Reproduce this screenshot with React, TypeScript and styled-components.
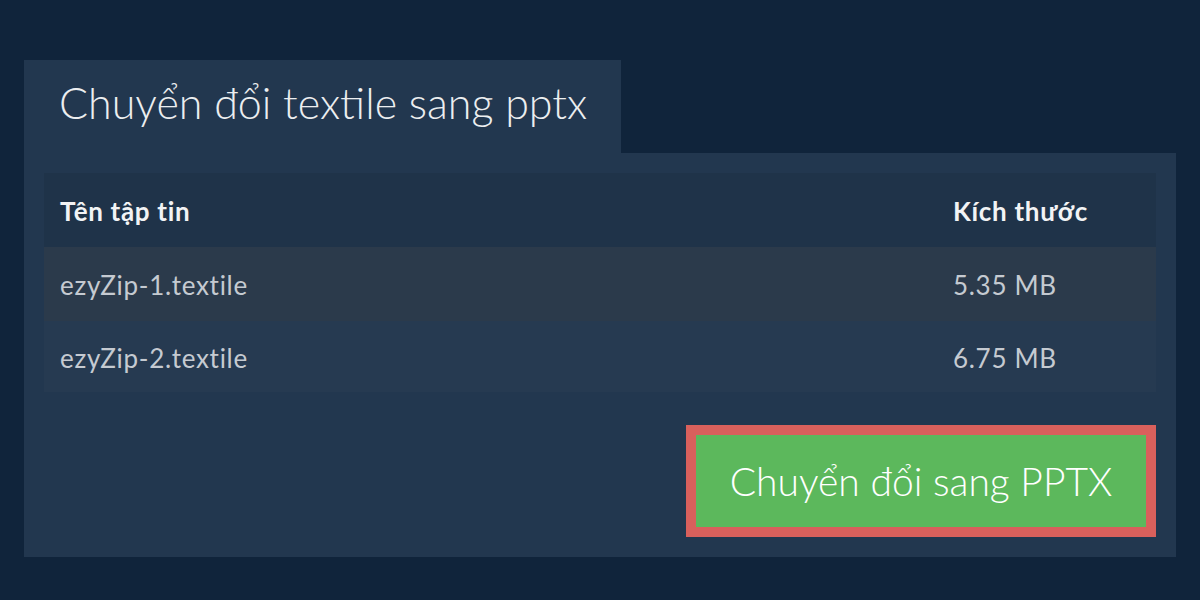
import React from 'react';
import styled, { createGlobalStyle } from 'styled-components';

const GlobalStyle = createGlobalStyle`
  html, body {
    margin: 0;
    padding: 0;
    background-color: #10243b;
    font-family: 'Lato', 'Noto Sans', sans-serif;
  }
`;

const Page = styled.div`
  width: 1200px;
  height: 600px;
  box-sizing: border-box;
  padding: 60px 24px 43px;
  display: flex;
  flex-direction: column;
`;

const Tab = styled.div`
  align-self: flex-start;
  height: 94px;
  padding: 0 34px 0 35px;
  background-color: #22374f;
  display: flex;
  align-items: center;

  h1 {
    margin: 0 0 8px;
    font-size: 43px;
    font-weight: 300;
    color: #eceef0;
  }
`;

const Panel = styled.div`
  background-color: #22374f;
  padding: 20px;
  display: flex;
  flex-direction: column;
  gap: 33px;
`;

const FileTable = styled.div`
  display: flex;
  flex-direction: column;
`;

const Row = styled.div<{ $bg: string; $height: number; $head?: boolean }>`
  display: grid;
  grid-template-columns: 1fr 203px;
  align-items: center;
  height: ${(p) => p.$height}px;
  padding: 2px 0 0 16px;
  box-sizing: border-box;
  background-color: ${(p) => p.$bg};
  font-size: 26px;
  letter-spacing: 0.7px;
  font-weight: ${(p) => (p.$head ? 700 : 400)};
  color: ${(p) => (p.$head ? '#f2f3f5' : '#c5cad1')};
`;

const Footer = styled.div`
  display: flex;
  justify-content: flex-end;
`;

const ConvertButton = styled.button`
  width: 470px;
  height: 112px;
  box-sizing: border-box;
  border: 10px solid #d9605c;
  background-color: #5cb85c;
  color: #ffffff;
  font-family: 'Lato', 'Noto Sans', sans-serif;
  font-size: 39px;
  font-weight: 300;
  padding: 0;
  cursor: pointer;
`;

const files = [
  { name: 'ezyZip-1.textile', size: '5.35 MB', bg: '#2b3a4b', height: 74 },
  { name: 'ezyZip-2.textile', size: '6.75 MB', bg: '#263a51', height: 71 },
];

export default function App() {
  return (
    <>
      <GlobalStyle />
      <Page>
        <Tab>
          <h1>Chuyển đổi textile sang pptx</h1>
        </Tab>
        <Panel>
          <FileTable>
            <Row $bg="#1f3349" $height={74} $head>
              <span>Tên tập tin</span>
              <span>Kích thước</span>
            </Row>
            {files.map((f) => (
              <Row key={f.name} $bg={f.bg} $height={f.height}>
                <span>{f.name}</span>
                <span>{f.size}</span>
              </Row>
            ))}
          </FileTable>
          <Footer>
            <ConvertButton>Chuyển đổi sang PPTX</ConvertButton>
          </Footer>
        </Panel>
      </Page>
    </>
  );
}
